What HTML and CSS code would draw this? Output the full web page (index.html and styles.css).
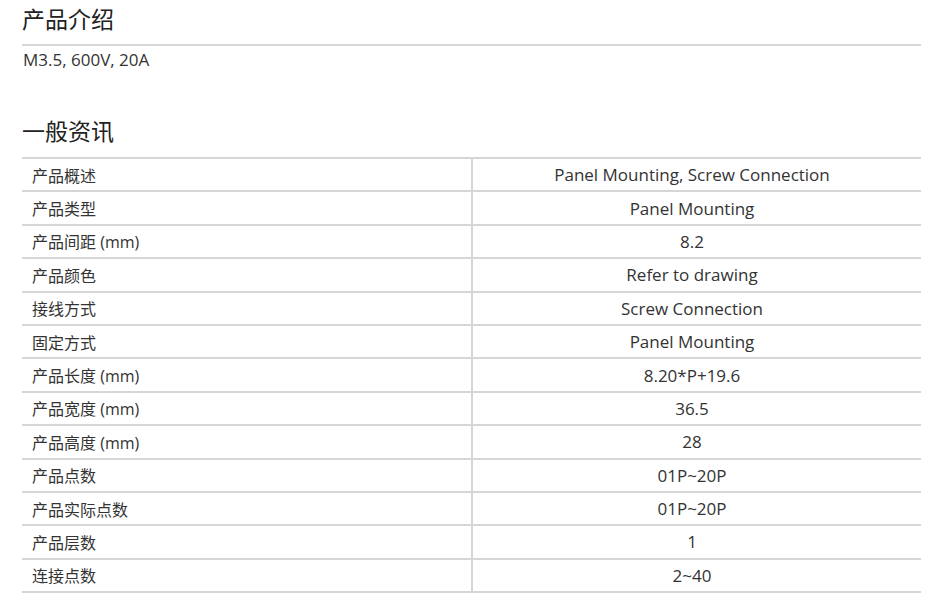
FILE: index.html
```html
<!DOCTYPE html>
<html lang="zh">
<head>
<meta charset="utf-8">
<link rel="stylesheet" href="styles.css">
</head>
<body>
<div class="page">
  <h2 class="title first">产品介绍</h2>
  <p class="intro">M3.5, 600V, 20A</p>
  <h2 class="title second">一般资讯</h2>
  <div class="spec">
    <div class="row"><div class="label">产品概述</div><div class="value">Panel Mounting, Screw Connection</div></div>
    <div class="row"><div class="label">产品类型</div><div class="value">Panel Mounting</div></div>
    <div class="row"><div class="label">产品间距 (mm)</div><div class="value">8.2</div></div>
    <div class="row"><div class="label">产品颜色</div><div class="value">Refer to drawing</div></div>
    <div class="row"><div class="label">接线方式</div><div class="value">Screw Connection</div></div>
    <div class="row"><div class="label">固定方式</div><div class="value">Panel Mounting</div></div>
    <div class="row"><div class="label">产品长度 (mm)</div><div class="value">8.20*P+19.6</div></div>
    <div class="row"><div class="label">产品宽度 (mm)</div><div class="value">36.5</div></div>
    <div class="row"><div class="label">产品高度 (mm)</div><div class="value">28</div></div>
    <div class="row"><div class="label">产品点数</div><div class="value">01P~20P</div></div>
    <div class="row"><div class="label">产品实际点数</div><div class="value">01P~20P</div></div>
    <div class="row"><div class="label">产品层数</div><div class="value">1</div></div>
    <div class="row"><div class="label">连接点数</div><div class="value">2~40</div></div>
  </div>
</div>
</body>
</html>
```
FILE: styles.css
```css
html, body {
  margin: 0;
  padding: 0;
  background: #ffffff;
}
body {
  font-family: "Open Sans", "Noto Sans CJK SC", sans-serif;
  color: #333333;
}
.page {
  width: 899px;
  margin-left: 22px;
}
.title {
  margin: 0;
  font-weight: 400;
  font-size: 23px;
  line-height: 32px;
  color: #222222;
  padding-bottom: 9px;
  border-bottom: 2px solid #d6d6d6;
}
.title.first {
  margin-top: 3px;
}
.title.second {
  margin-top: 41px;
  padding-bottom: 10px;
}
.intro {
  margin: 0;
  font-size: 17px;
  line-height: 28px;
  padding-left: 1px;
}
.spec {
  display: flex;
  flex-direction: column;
}
.row {
  display: grid;
  grid-template-columns: 451px 1fr;
  height: 33.4px;
  box-sizing: border-box;
  border-bottom: 2px solid #d6d6d6;
  font-size: 17px;
}
.label {
  display: flex;
  align-items: center;
  padding-left: 10px;
  font-size: 16px;
  border-right: 2px solid #d6d6d6;
}
.value {
  display: flex;
  align-items: center;
  justify-content: center;
  padding-right: 10px;
}
```
